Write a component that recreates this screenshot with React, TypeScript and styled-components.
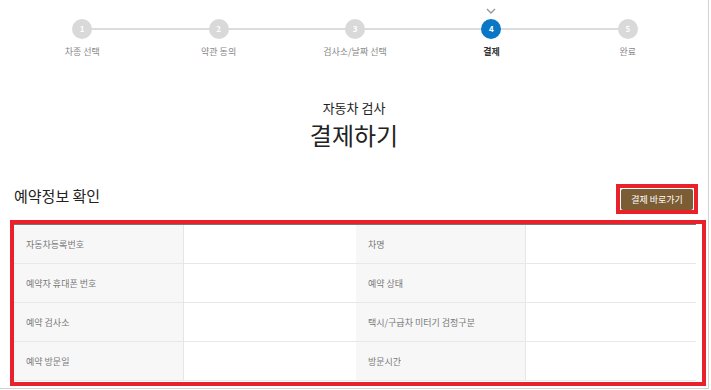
import * as React from "react";
import styled, { createGlobalStyle, css } from "styled-components";

const GlobalStyle = createGlobalStyle`
  body {
    margin: 0;
    background: #fff;
    font-family: "Noto Sans CJK KR", "Noto Sans", "Liberation Sans", sans-serif;
  }
`;

const Frame = styled.div`
  box-sizing: border-box;
  width: 709px;
  height: 389px;
  border-right: 1px solid #d2d2d2;
  border-bottom: 1px solid #d2d2d2;
  overflow: hidden;
`;

const StepList = styled.ol`
  position: relative;
  display: flex;
  margin: 0 12px 0 14px;
  padding: 6px 0 0 0;
  list-style: none;

  &::before {
    content: "";
    position: absolute;
    top: 28px;
    left: 10%;
    right: 10%;
    height: 2px;
    background: #dcdcdc;
  }
`;

const Step = styled.li`
  flex: 1;
  display: flex;
  flex-direction: column;
  align-items: center;
`;

const Marker = styled.div`
  height: 13px;
  display: flex;
  align-items: flex-start;
  padding-top: 2px;
  box-sizing: border-box;
`;

const Circle = styled.span<{ $active?: boolean }>`
  position: relative;
  width: 20px;
  height: 20px;
  border-radius: 50%;
  background: ${p => (p.$active ? "#0a77c6" : "#d9d9d9")};
  color: #fff;
  font-size: 8px;
  font-weight: bold;
  line-height: 20px;
  text-align: center;
`;

const StepLabel = styled.span<{ $active?: boolean }>`
  margin-top: 7px;
  font-size: 9px;
  line-height: 12px;
  color: #888;
  ${p =>
    p.$active &&
    css`
      color: #333;
      font-weight: bold;
    `};
`;

const TitleBlock = styled.div`
  margin-top: 42px;
  text-align: center;
  color: #222;
`;

const SubTitle = styled.div`
  font-size: 13px;
  line-height: 16px;
`;

const Title = styled.h1`
  margin: 4px 0 0;
  font-size: 24px;
  font-weight: normal;
  line-height: 30px;
`;

const SectionHeader = styled.div`
  display: flex;
  justify-content: space-between;
  align-items: flex-start;
  margin: 34px 10px 0 14px;
`;

const SectionTitle = styled.h2`
  margin: 0;
  font-size: 15px;
  font-weight: normal;
  line-height: 24px;
  color: #222;
`;

const Highlight = styled.div`
  border: 4px solid #e8212b;
  padding: 1px 1px 0 1px;
`;

const PayButton = styled.button`
  display: block;
  width: 72px;
  height: 21px;
  padding: 0;
  border: 0;
  border-radius: 2px;
  background: #7b5c33;
  color: #fff;
  font-family: inherit;
  font-size: 9px;
  cursor: pointer;
`;

const TableHighlight = styled(Highlight)`
  margin: 6px 2px 0 10px;
  padding: 0 6px 1px 0;
`;

const InfoTable = styled.div`
  display: grid;
  grid-template-columns: 170px 172px 170px 1fr;
  border-top: 1px solid #777;
`;

const Cell = styled.div<{ $head?: boolean }>`
  box-sizing: border-box;
  height: 39px;
  display: flex;
  align-items: center;
  padding-left: 12px;
  border-bottom: 1px solid #e8e8e8;
  font-size: 9px;
  color: #777;
  background: ${p => (p.$head ? "#f7f7f7" : "#fff")};
  border-right: ${p => (p.$head ? "1px solid #e6e6e6" : "0")};
`;

const Chevron = () => (
  <svg width="10" height="6" viewBox="0 0 10 6">
    <path d="M1 1l4 4 4-4" fill="none" stroke="#999" strokeWidth="1.4" />
  </svg>
);

const steps = ["차종 선택", "약관 동의", "검사소/날짜 선택", "결제", "완료"];
const current = 3;

const rows = [
  ["자동차등록번호", "차명"],
  ["예약자 휴대폰 번호", "예약 상태"],
  ["예약 검사소", "택시/구급차 미터기 검정구분"],
  ["예약 방문일", "방문시간"],
];

const Stepper = () => (
  <StepList>
    {steps.map((label, i) => (
      <Step key={label}>
        <Marker>{i === current ? <Chevron /> : null}</Marker>
        <Circle $active={i === current}>{i + 1}</Circle>
        <StepLabel $active={i === current}>{label}</StepLabel>
      </Step>
    ))}
  </StepList>
);

const App = () => (
  <Frame>
    <GlobalStyle />
    <Stepper />
    <TitleBlock>
      <SubTitle>자동차 검사</SubTitle>
      <Title>결제하기</Title>
    </TitleBlock>
    <SectionHeader>
      <SectionTitle>예약정보 확인</SectionTitle>
      <Highlight>
        <PayButton>결제 바로가기</PayButton>
      </Highlight>
    </SectionHeader>
    <TableHighlight>
      <InfoTable>
        {rows.map(([left, right]) => (
          <React.Fragment key={left}>
            <Cell $head>{left}</Cell>
            <Cell />
            <Cell $head>{right}</Cell>
            <Cell />
          </React.Fragment>
        ))}
      </InfoTable>
    </TableHighlight>
  </Frame>
);

export default App;
